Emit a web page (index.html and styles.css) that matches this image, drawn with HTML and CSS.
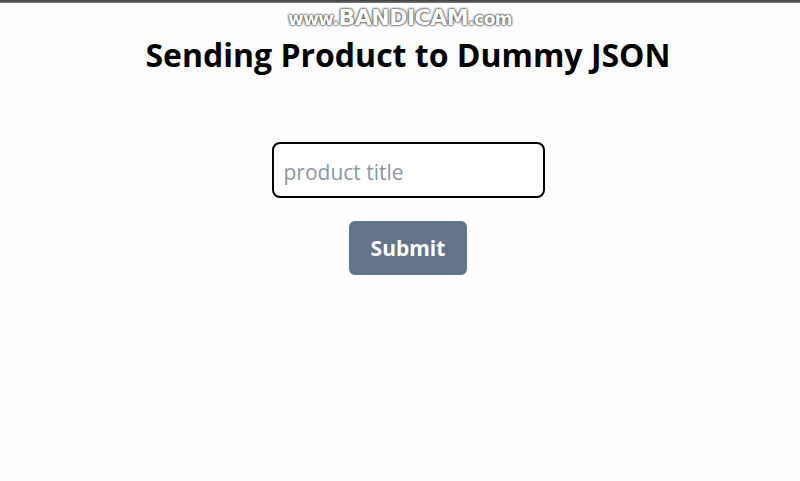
FILE: index.html
```html
<!DOCTYPE html>
<html lang="en">
<head>
  <meta charset="UTF-8">
  <meta name="viewport" content="width=device-width, initial-scale=1.0">
  <title>Send Product</title>
  <link rel="stylesheet" href="styles.css">
</head>
<body>
  <div class="topbar"></div>
  <div class="watermark">www.<b>BANDICAM</b>.com</div>
  <div class="app">
    <h1>Sending Product to Dummy JSON</h1>
    <form class="form">
      <input type="text" class="title-input" placeholder="product title" autofocus>
      <button type="button" class="submit">Submit</button>
    </form>
  </div>
</body>
</html>
```

FILE: styles.css
```css
body {
  margin: 0;
  background: #fefdfe;
  font-family: "Open Sans", "Noto Sans", sans-serif;
}

.topbar {
  height: 3px;
  background: linear-gradient(to bottom, #3a3a3a, #777);
}

.watermark {
  position: absolute;
  top: 5px;
  left: 0;
  right: 0;
  text-align: center;
  font-family: "DejaVu Sans", sans-serif;
  font-size: 17px;
  font-weight: 700;
  color: #fff;
  letter-spacing: -0.5px;
  text-shadow: 0 0 2px #444, 0 0 2px #444, 0 0 3px #888;
}

.watermark b {
  font-size: 22px;
}

.app {
  padding-left: 16px;
  text-align: center;
}

h1 {
  margin: 33px 0 0;
  font-size: 32px;
  font-weight: 700;
  line-height: 38px;
  color: #000;
}

.form {
  display: flex;
  flex-direction: column;
  align-items: center;
  gap: 23px;
  margin-top: 68px;
}

.title-input {
  box-sizing: border-box;
  width: 273px;
  height: 56px;
  padding: 4px 10px 0;
  border: 2px solid #000;
  border-radius: 8px;
  font-family: inherit;
  font-size: 21px;
  background: #fff;
  outline: none;
  caret-color: #777;
}

.title-input::placeholder {
  color: #8f96a0;
}

.submit {
  width: 118px;
  height: 54px;
  border: none;
  border-radius: 6px;
  background: #64748b;
  color: #fff;
  font-family: inherit;
  font-size: 21px;
  font-weight: 700;
  cursor: pointer;
}
```
